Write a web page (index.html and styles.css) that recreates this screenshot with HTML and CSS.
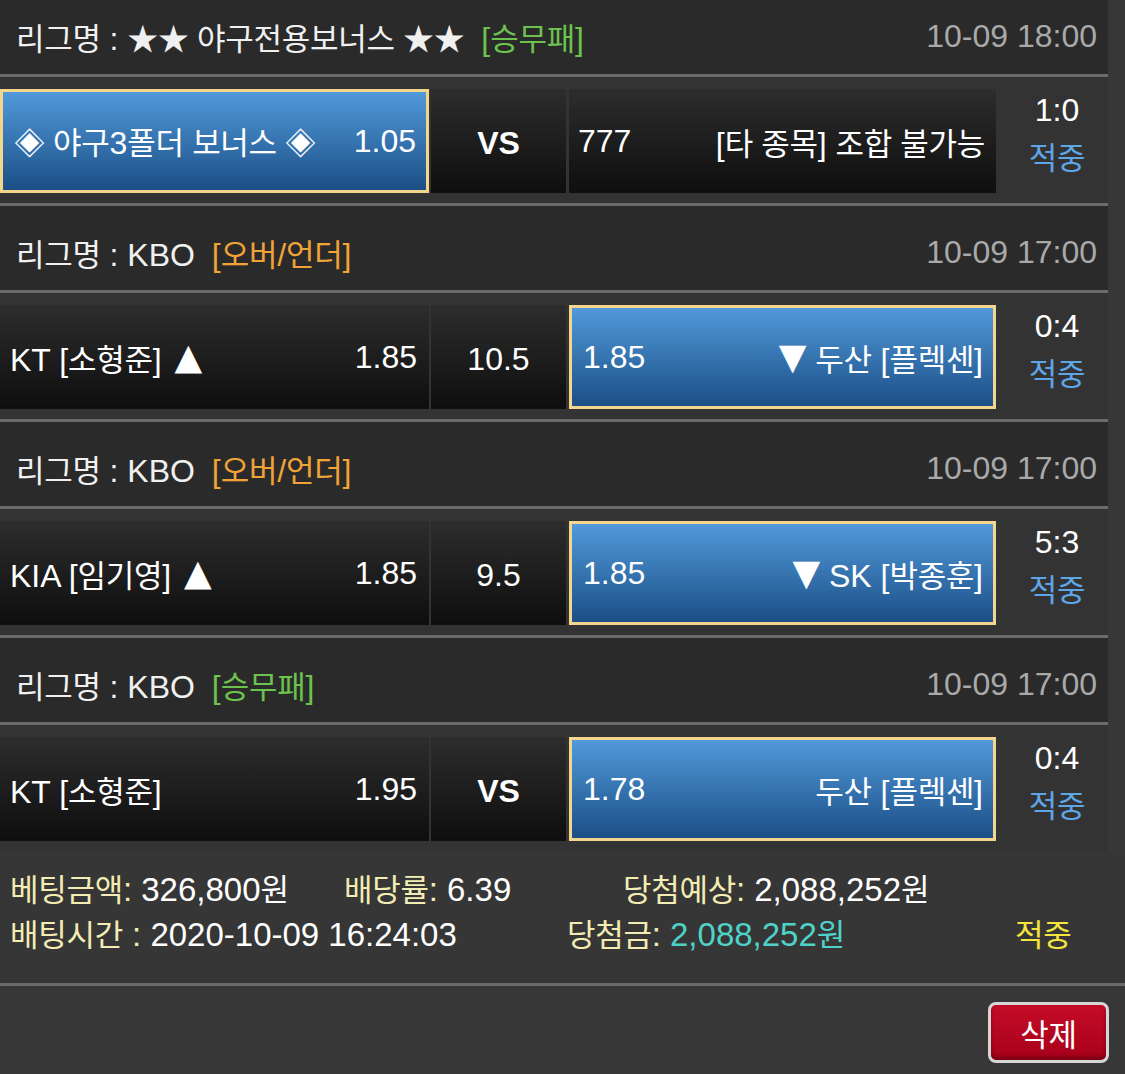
FILE: index.html
```html
<!DOCTYPE html>
<html lang="ko">
<head>
<meta charset="utf-8">
<title>베팅내역</title>
<link rel="stylesheet" href="styles.css">
</head>
<body>
<div class="slip">
  <div class="league">
    <div class="lname"><span class="k">리그명</span> : <span class="k">★★ 야구전용보너스 ★★</span> <span class="tag green">[<span class="k">승무패</span>]</span></div>
    <div class="time">10-09 18:00</div>
  </div>
  <div class="match">
    <div class="cell sel"><span><span class="k">◈ 야구</span>3<span class="k">폴더 보너스 ◈</span></span><span>1.05</span></div>
    <div class="cell mid"><span class="vs">VS</span></div>
    <div class="cell dark away"><span>777</span><span>[<span class="k">타 종목</span>] <span class="k">조합 불가능</span></span></div>
    <div class="score"><span>1:0</span><span class="hit k">적중</span></div>
  </div>

  <div class="league">
    <div class="lname"><span class="k">리그명</span> : KBO <span class="tag orange">[<span class="k">오버</span>/<span class="k">언더</span>]</span></div>
    <div class="time">10-09 17:00</div>
  </div>
  <div class="match">
    <div class="cell dark home"><span>KT [<span class="k">소형준</span>] <span class="tri">▲</span></span><span>1.85</span></div>
    <div class="cell mid"><span>10.5</span></div>
    <div class="cell sel"><span>1.85</span><span><span class="tri">▼</span> <span class="k">두산</span> [<span class="k">플렉센</span>]</span></div>
    <div class="score"><span>0:4</span><span class="hit k">적중</span></div>
  </div>

  <div class="league">
    <div class="lname"><span class="k">리그명</span> : KBO <span class="tag orange">[<span class="k">오버</span>/<span class="k">언더</span>]</span></div>
    <div class="time">10-09 17:00</div>
  </div>
  <div class="match">
    <div class="cell dark home"><span>KIA [<span class="k">임기영</span>] <span class="tri">▲</span></span><span>1.85</span></div>
    <div class="cell mid"><span>9.5</span></div>
    <div class="cell sel"><span>1.85</span><span><span class="tri">▼</span> SK [<span class="k">박종훈</span>]</span></div>
    <div class="score"><span>5:3</span><span class="hit k">적중</span></div>
  </div>

  <div class="league">
    <div class="lname"><span class="k">리그명</span> : KBO <span class="tag green">[<span class="k">승무패</span>]</span></div>
    <div class="time">10-09 17:00</div>
  </div>
  <div class="match last">
    <div class="cell dark home"><span>KT [<span class="k">소형준</span>]</span><span>1.95</span></div>
    <div class="cell mid"><span class="vs">VS</span></div>
    <div class="cell sel"><span>1.78</span><span><span class="k">두산</span> [<span class="k">플렉센</span>]</span></div>
    <div class="score"><span>0:4</span><span class="hit k">적중</span></div>
  </div>
</div>

<div class="summary">
  <div class="line l1">
    <span><span class="lab"><span class="k">베팅금액</span>:</span> 326,800<span class="k">원</span></span>
    <span><span class="lab"><span class="k">배당률</span>:</span> 6.39</span>
    <span><span class="lab"><span class="k">당첨예상</span>:</span> 2,088,252<span class="k">원</span></span>
  </div>
  <div class="line l2">
    <span><span class="lab"><span class="k">배팅시간</span> :</span> 2020-10-09 16:24:03</span>
    <span><span class="lab"><span class="k">당첨금</span>:</span> <span class="teal">2,088,252<span class="k">원</span></span></span>
    <span class="yel k">적중</span>
  </div>
</div>

<div class="actions">
  <button class="del" type="button"><span class="k">삭제</span></button>
</div>
</body>
</html>
```

FILE: styles.css
```css
* {
  box-sizing: border-box;
  margin: 0;
  padding: 0;
}

html,
body {
  background: #373737;
}

body {
  width: 1125px;
  height: 1074px;
  overflow: hidden;
  font-family: "Liberation Sans", "Noto Sans CJK KR", sans-serif;
  font-size: 32px;
  color: #fff;
}

.k {
  font-family: "Noto Sans CJK KR", "Liberation Sans", sans-serif;
  font-size: 31px;
  letter-spacing: -0.3px;
}

.tri {
  font-family: "DejaVu Sans", sans-serif;
  font-size: 36px;
  line-height: 1;
  vertical-align: 2px;
  margin-left: 4px;
}

.slip {
  width: 1108px;
  margin-top: -10px;
}

.league {
  height: 87px;
  display: flex;
  justify-content: space-between;
  align-items: center;
  padding: 8px 11px 0 16px;
  background: #2a2a2a;
  border-bottom: 3px solid #6a6a6a;
  color: #f0f0f0;
  white-space: nowrap;
}

.tag {
  margin-left: 8px;
}

.green {
  color: #6cc24e;
}

.orange {
  color: #f0a336;
}

.time {
  color: #a9a9a9;
}

.match {
  height: 129px;
  display: grid;
  grid-template-columns: 429px 140px 427px 112px;
  padding: 12px 0 10px;
  background: #333;
  border-bottom: 3px solid #6a6a6a;
  white-space: nowrap;
}

.match.last {
  height: 126px;
  border-bottom: 0;
}

.cell {
  display: flex;
  align-items: center;
  justify-content: space-between;
  background: linear-gradient(#2d2d2d, #0e0e0e);
}

.cell.home {
  padding: 0 12px 0 10px;
}

.cell.away {
  padding: 0 11px 0 9px;
}

.cell.mid {
  margin: 0 3px 0 2px;
  justify-content: center;
  padding-top: 4px;
}

.cell.sel {
  background: linear-gradient(#5199da, #1b4f86);
  border: 3px solid #f2d68c;
  padding: 0 10px 0 11px;
}

.cell.sel .tri {
  margin-left: 0;
}

.vs {
  font-weight: bold;
}

.score {
  display: flex;
  flex-direction: column;
  align-items: center;
  margin-top: -2px;
  padding-left: 10px;
  line-height: 46px;
}

.hit {
  color: #5ea6e6;
}

.summary {
  height: 135px;
  padding: 14px 0 0 10px;
  background: #363636;
  border-bottom: 3px solid #6a6a6a;
  white-space: nowrap;
  font-size: 33px;
}

.line {
  display: grid;
  height: 45px;
  align-items: center;
}

.l1 {
  grid-template-columns: 334px 279px 1fr;
}

.l2 {
  grid-template-columns: 557px 448px 1fr;
}

.lab {
  color: #f3edb4;
}

.teal {
  color: #4fd3c9;
}

.yel {
  color: #f4e43e;
}

.actions {
  display: flex;
  justify-content: flex-end;
  padding: 16px 16px 0 0;
}

.del {
  width: 121px;
  height: 61px;
  border: 3px solid #d6d6d6;
  border-radius: 8px;
  background: linear-gradient(#c40c28, #a8001a);
  box-shadow: inset 0 -3px 4px rgba(0, 0, 0, 0.3);
  color: #fff;
  font-family: "Noto Sans CJK KR", sans-serif;
  display: flex;
  align-items: center;
  justify-content: center;
}
```
